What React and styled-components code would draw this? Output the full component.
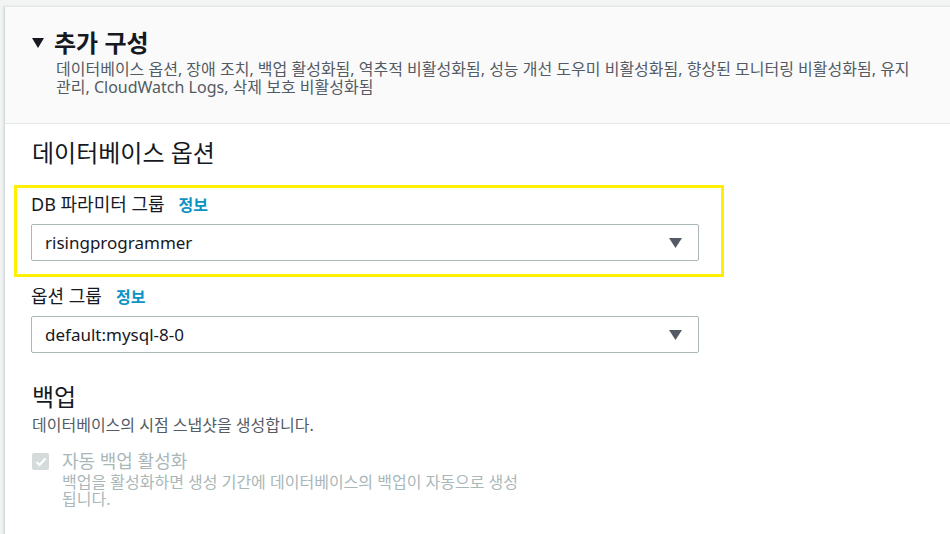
import React from "react";
import styled, { createGlobalStyle } from "styled-components";

const Global = createGlobalStyle`
  html, body { margin: 0; padding: 0; background: #f2f3f3; }
  body { font-family: "Noto Sans", "Noto Sans CJK KR", sans-serif; color: #16191f; }
  * { box-sizing: border-box; }
`;

const Page = styled.div`
  padding: 6px 0 0 4px;
  height: 534px;
  overflow: hidden;
`;

const Panel = styled.section`
  width: 960px;
  background: #fff;
  border-top: 1px solid #e6e8e8;
  border-left: 1px solid #d5dbdb;
  box-shadow: -1px 0 2px rgba(0,0,0,0.08);
  min-height: 600px;
`;

const Header = styled.div`
  background: #fafafa;
  border-bottom: 1px solid #e3e6e6;
  padding: 21px 20px 0 27px;
  height: 117px;
`;

const TitleRow = styled.div`
  display: flex;
  align-items: center;
  gap: 10px;
`;

const Title = styled.h2`
  margin: 0;
  font-size: 24px;
  font-weight: 700;
  line-height: 30px;
  color: #16191f;
`;

const HeaderDesc = styled.p`
  margin: 2px 0 0 24px;
  font-size: 16px;
  line-height: 18px;
  color: #545b64;
  max-width: 870px;
`;

const Body = styled.div`
  padding: 14px 20px 0 27px;
`;

const SectionTitle = styled.h3`
  margin: 0;
  font-size: 24px;
  font-weight: 400;
  line-height: 30px;
  color: #16191f;
`;

const Highlight = styled.div`
  margin: ${(p) => (p.$top ? p.$top : "0")} 0 0 -18px;
  width: 710px;
  border: 3px solid ${(p) => (p.$on ? "#ffef00" : "transparent")};
  padding: 5px 22px 13px 14px;
`;

const Field = styled.div`
  width: 668px;
`;

const LabelRow = styled.div`
  display: flex;
  align-items: baseline;
  gap: 14px;
  font-size: 18px;
  line-height: 22px;
  color: #16191f;
`;

const Info = styled.a`
  font-size: 16px;
  font-weight: 700;
  color: #0c93c6;
  text-decoration: none;
`;

const Select = styled.div`
  margin-top: 8px;
  height: 37px;
  border: 1px solid #aab7b8;
  border-radius: 2px;
  display: flex;
  align-items: center;
  justify-content: space-between;
  padding: 0 16px 0 13px;
  font-size: 17px;
  color: #16191f;
  background: #fff;
`;

const Caret = () => (
  <svg width="13" height="10" viewBox="0 0 13 10">
    <path d="M0 0 H13 L6.5 10 Z" fill="#545b64" />
  </svg>
);

const Backup = styled.div`
  margin-top: 13px;
`;

const Desc = styled.p`
  margin: 4px 0 0;
  font-size: 16px;
  line-height: 18px;
  color: #545b64;
`;

const CheckRow = styled.div`
  display: flex;
  gap: 13px;
  margin-top: 17px;
`;

const Box = styled.span`
  flex: none;
  width: 17px;
  height: 17px;
  margin-top: 2px;
  border-radius: 2px;
  background: #d5dbdb;
  display: flex;
  align-items: center;
  justify-content: center;
`;

const CheckText = styled.div`
  width: 462px;
`;

const CheckLabel = styled.div`
  font-size: 18px;
  line-height: 20px;
  color: #aab7b8;
`;

const CheckDesc = styled.div`
  margin-top: 3px;
  font-size: 16px;
  line-height: 17px;
  color: #aab7b8;
`;

function SelectField({ label, value }) {
  return (
    <Field>
      <LabelRow>
        <span>{label}</span>
        <Info href="#">정보</Info>
      </LabelRow>
      <Select>
        <span>{value}</span>
        <Caret />
      </Select>
    </Field>
  );
}

export default function App() {
  return (
    <>
      <Global />
      <Page>
        <Panel>
          <Header>
            <TitleRow>
              <svg width="12" height="10" viewBox="0 0 12 10">
                <path d="M0 0 H12 L6 10 Z" fill="#16191f" />
              </svg>
              <Title>추가 구성</Title>
            </TitleRow>
            <HeaderDesc>
              데이터베이스 옵션, 장애 조치, 백업 활성화됨, 역추적 비활성화됨, 성능 개선 도우미 비활성화됨, 향상된 모니터링 비활성화됨, 유지 관리, CloudWatch Logs, 삭제 보호 비활성화됨
            </HeaderDesc>
          </Header>
          <Body>
            <SectionTitle>데이터베이스 옵션</SectionTitle>
            <Highlight $on $top="17px">
              <SelectField label="DB 파라미터 그룹" value="risingprogrammer" />
            </Highlight>
            <Highlight>
              <SelectField label="옵션 그룹" value="default:mysql-8-0" />
            </Highlight>
            <Backup>
              <SectionTitle>백업</SectionTitle>
              <Desc>데이터베이스의 시점 스냅샷을 생성합니다.</Desc>
              <CheckRow>
                <Box>
                  <svg width="12" height="10" viewBox="0 0 12 10">
                    <path d="M1.5 5 L4.5 8 L10.5 1.5" stroke="#fff" strokeWidth="2.2" fill="none" />
                  </svg>
                </Box>
                <CheckText>
                  <CheckLabel>자동 백업 활성화</CheckLabel>
                  <CheckDesc>백업을 활성화하면 생성 기간에 데이터베이스의 백업이 자동으로 생성됩니다.</CheckDesc>
                </CheckText>
              </CheckRow>
            </Backup>
          </Body>
        </Panel>
      </Page>
    </>
  );
}
